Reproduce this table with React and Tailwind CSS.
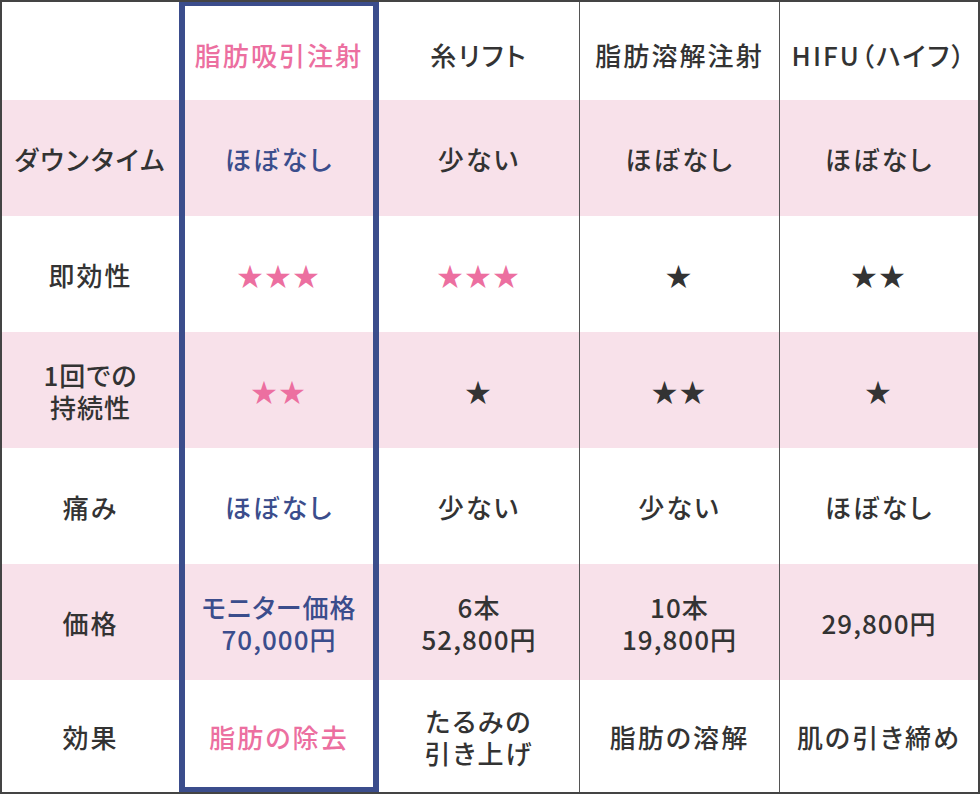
import React from "react";

const PINK = "text-[#ec6fa0]";
const BLUE = "text-[#3b4d8c]";

const rows = [
    { h: "h-[98px] pt-[7px]", bg: "bg-white", cells: [[""], ["脂肪吸引注射", PINK], ["糸リフト"], ["脂肪溶解注射"], ["HIFU（ハイフ）"]] },
    { h: "h-[116px] pt-[2px]", bg: "bg-[#f8e1ea]", cells: [["ダウンタイム"], ["ほぼなし", BLUE], ["少ない"], ["ほぼなし"], ["ほぼなし"]] },
    { h: "h-[116px] pt-[2px]", bg: "bg-white", cells: [["即効性"], ["★★★", PINK], ["★★★", PINK], ["★"], ["★★"]] },
    { h: "h-[116px] pt-[2px]", bg: "bg-[#f8e1ea]", cells: [["1回での\n持続性"], ["★★", PINK], ["★"], ["★★"], ["★"]] },
    { h: "h-[116px] pt-[2px]", bg: "bg-white", cells: [["痛み"], ["ほぼなし", BLUE], ["少ない"], ["少ない"], ["ほぼなし"]] },
    { h: "h-[116px] pt-[2px]", bg: "bg-[#f8e1ea]", cells: [["価格"], ["モニター価格\n70,000円", BLUE], ["6本\n52,800円"], ["10本\n19,800円"], ["29,800円"]] },
    { h: "h-[112px] pt-[2px]", bg: "bg-white", cells: [["効果"], ["脂肪の除去", PINK], ["たるみの\n引き上げ"], ["脂肪の溶解"], ["肌の引き締め"]] },
];

const colBorder = ["", "", "", "border-l border-[#555]", "border-l border-[#555]"];

export default function App() {
    return (
        <div
            className="relative w-[980px] h-[794px] border-2 border-[#444] bg-white overflow-hidden"
            style={{ fontFamily: '"Noto Sans CJK JP", "Noto Sans", sans-serif' }}
        >
            <div className="grid grid-cols-[177px_200px_200px_200px_199px] [font-feature-settings:'palt']">
                {rows.map((row, r) =>
                    row.cells.map(([text, color], c) => (
                        <div
                            key={`${r}-${c}`}
                            className={`${row.h} ${row.bg} ${colBorder[c]} flex items-center justify-center text-center whitespace-pre-line text-[26px] leading-[32px] font-medium ${/\d/.test(text) ? "tracking-[0.04em]" : "tracking-[0.08em]"} ${color || "text-[#333]"}`}
                        >
                            {text}
                        </div>
                    ))
                )}
            </div>
            {/* highlighted column frame */}
            <div className="absolute left-[177px] top-[-2px] w-[200px] h-[793px] border-[6px] border-[#3b4d8c] pointer-events-none" />
        </div>
    );
}
